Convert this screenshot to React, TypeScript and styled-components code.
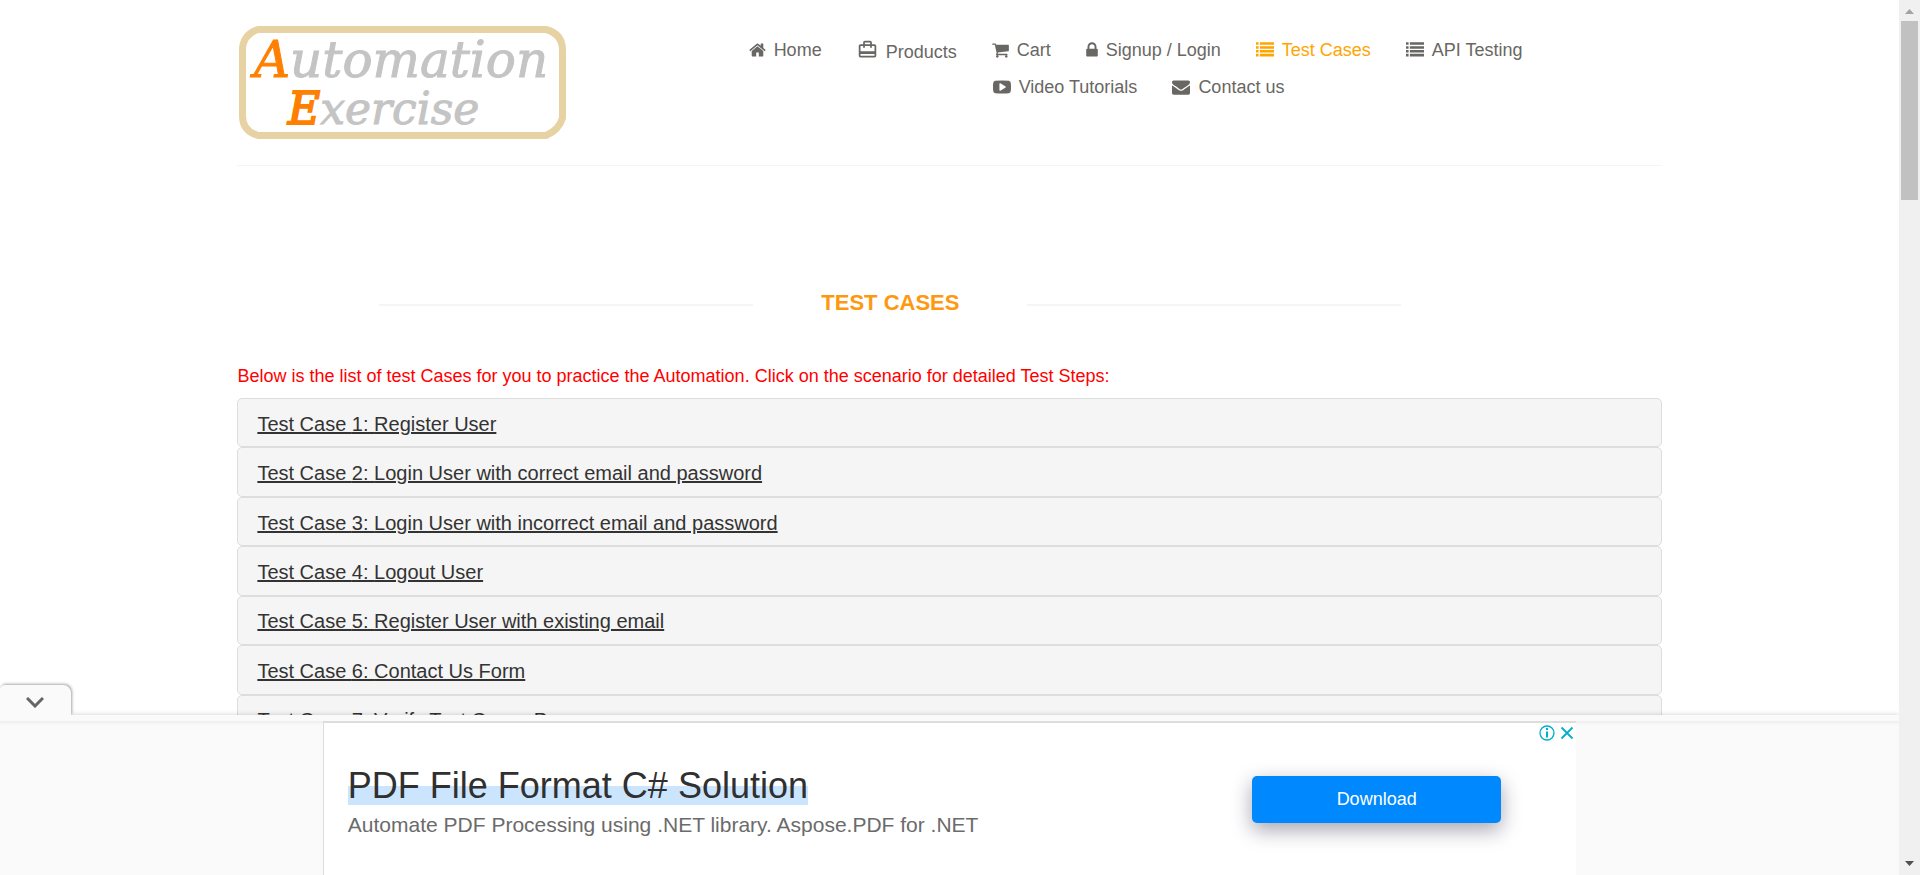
import React from "react";
import styled, { createGlobalStyle } from "styled-components";
import { MdCardTravel } from "react-icons/md";

const GlobalStyle = createGlobalStyle`
  *, *::before, *::after { box-sizing: border-box; }
  body {
    margin: 0;
    background: #fff;
    font-family: "Liberation Sans", Arial, Helvetica, sans-serif;
    overflow: hidden;
  }
  h2, h4, p, ul { margin: 0; padding: 0; font-weight: 400; }
  ul { list-style: none; }
  svg { display: block; flex: none; }
`;

const Shell = styled.div`
  display: flex;
  height: 100vh;
`;

const Page = styled.div`
  flex: 1;
  min-width: 0;
  overflow: hidden;
  display: flex;
  flex-direction: column;
`;

const Scroll = styled.div`
  flex: 1;
  min-height: 0;
  overflow: hidden;
`;

const Container = styled.div`
  width: 75%;
  min-width: 1200px;
  margin: 0 auto;
`;

const Header = styled.header`
  display: flex;
  justify-content: space-between;
  align-items: flex-start;
  padding: 26px 0 26px 2px;
  border-bottom: 1px solid #f5f5f5;
`;

const Nav = styled.nav`
  width: 913px;
  padding-top: 12px;
`;

const NavRow = styled.ul<{ $indent?: boolean }>`
  display: flex;
  align-items: flex-start;
  gap: 35px;
  height: 37px;
  padding-left: ${(p) => (p.$indent ? 244 : 0)}px;
`;

const NavLink = styled.a<{ $active?: boolean; $low?: boolean }>`
  display: flex;
  align-items: center;
  gap: 8px;
  color: ${(p) => (p.$active ? "orange" : "#696763")};
  font-size: 18px;
  line-height: ${(p) => (p.$low ? 28 : 24)}px;
  text-decoration: none;
  white-space: nowrap;

  svg {
    margin-bottom: ${(p) => (p.$low ? 6 : 0)}px;
  }
`;

const TitleBar = styled.div`
  display: flex;
  justify-content: center;
  align-items: center;
  width: 1306px;
  margin-top: 123px;
`;

const Rule = styled.span`
  width: 374px;
  height: 2px;
  margin-top: 4px;
  background: #f5f5f5;
`;

const Title = styled.h2`
  width: 274px;
  text-align: center;
  color: #fe980f;
  font-size: 22px;
  font-weight: 700;
  line-height: 28px;
`;

const Intro = styled.p`
  margin-top: 47px;
  color: red;
  font-size: 18px;
  line-height: 24px;
`;

const CaseList = styled.ul`
  display: grid;
  grid-auto-rows: 1fr;
  min-height: 346px;
  margin-top: 10px;
`;

const CaseItem = styled.li`
  display: flex;
  align-items: center;
  padding: 2px 19px 0;
  border: 1px solid #ddd;
  border-radius: 5px;
  background: #f5f5f5;
`;

const CaseLink = styled.a`
  color: #333;
  font-size: 20px;
  line-height: 24px;
  text-decoration: underline;
`;

const AdDock = styled.section`
  position: relative;
  border-top: 6px solid #fafafa;
  background: #fafafa;
  box-shadow: 0 0 5px rgba(0, 0, 0, 0.2);
`;

const CollapseTab = styled.button`
  position: absolute;
  left: 0;
  bottom: 100%;
  display: flex;
  align-items: center;
  justify-content: center;
  width: 71px;
  height: 30px;
  margin-bottom: 6px;
  padding: 4px 1px 0 0;
  border: 0;
  border-radius: 5px 8px 0 0;
  background: #fafafa;
  box-shadow: 1px -1px 3px rgba(0, 0, 0, 0.35);
  clip-path: inset(-6px -6px 0 0);
`;

const AdFrame = styled.div`
  background: linear-gradient(#eee, #fafafa) top / 100% 4px no-repeat;
`;

const AdCard = styled.div`
  position: relative;
  display: flex;
  justify-content: space-between;
  align-items: flex-start;
  width: 66%;
  min-width: 1100px;
  height: 154px;
  margin: 0 auto;
  padding: 45px 75px 0 26px;
  border-top: 2px solid #ddd;
  border-left: 1px solid #ddd;
  background: #fff;
`;

const AdCopy = styled.div`
  margin-left: -2px;
`;

const AdHeading = styled.a`
  display: inline-block;
  height: 37px;
  color: #303030;
  background: linear-gradient(#cce5ff, #cce5ff) left bottom / 100% 19px no-repeat;
  font-size: 36px;
  line-height: 36px;
  text-decoration: none;
`;

const AdText = styled.p`
  margin-top: 7px;
  color: #6b6b6b;
  font-size: 21px;
  line-height: 26px;
`;

const Download = styled.button`
  width: 249px;
  height: 47px;
  margin-top: 8px;
  border: 0;
  border-radius: 5px;
  background: #08f;
  box-shadow: 0 7px 20px rgba(30, 30, 60, 0.4);
  color: #fff;
  font-family: inherit;
  font-size: 18px;
`;

const AdControls = styled.div`
  position: absolute;
  top: 2px;
  right: 2px;
  display: flex;
  gap: 5px;
`;

const AdControl = styled.button`
  padding: 0;
  border: 0;
  background: none;
`;

const Bar = styled.div`
  display: flex;
  flex-direction: column;
  align-items: center;
  width: 21px;
  padding: 9px 0;
  background: #f0f0f0;
`;

const Thumb = styled.div`
  width: 17px;
  height: 179px;
  margin: 7px 0 auto;
  background: #c1c1c1;
`;

const square = (x: number, w: number) => [128, 512, 896, 1280].map((y) => `M${x} ${y}h${w}v256h-${w}z`).join("");

const icons = {
  home: {
    x: 64, w: 1664, size: 17,
    d: "M1472 992v480q0 26-19 45t-45 19h-384v-384h-256v384h-384q-26 0-45-19t-19-45v-480q0-1 .5-3t.5-3l575-474 575 474q1 2 1 6zm223-69l-62 74q-8 9-21 11h-3q-13 0-21-7l-692-577-692 577q-12 8-24 7-13-2-21-11l-62-74q-8-10-7-23.5t11-21.5l719-599q32-26 76-26t76 26l244 204v-195q0-14 9-23t23-9h192q14 0 23 9t9 23v408l219 182q10 8 11 21.5t-7 23.5z",
  },
  cart: {
    x: 64, w: 1664, size: 17,
    d: "M704 1536q0 52-38 90t-90 38-90-38-38-90 38-90 90-38 90 38 38 90zm896 0q0 52-38 90t-90 38-90-38-38-90 38-90 90-38 90 38 38 90zm128-1088v512q0 24-16.5 42.5t-40.5 21.5l-1044 122q13 60 13 70 0 16-24 64h920q26 0 45 19t19 45-19 45-45 19h-1024q-26 0-45-19t-19-45q0-11 8-31.5t16-36 21.5-40 15.5-29.5l-177-823h-204q-26 0-45-19t-19-45 19-45 45-19h256q16 0 28.5 6.5t19.5 15.5 13 24.5 8 26 5.5 29.5 4.5 26h1201q26 0 45 19t19 45z",
  },
  lock: {
    x: 320, w: 1152, size: 12,
    d: "M640 768h512v-192q0-106-75-181t-181-75-181 75-75 181v192zm832 96v576q0 40-28 68t-68 28h-960q-40 0-68-28t-28-68v-576q0-40 28-68t68-28h32v-192q0-184 132-316t316-132 316 132 132 316v192h32q40 0 68 28t28 68z",
  },
  list: { x: 0, w: 1792, size: 18, d: square(0, 256) + square(384, 1408) },
  video: {
    x: 0, w: 1792, size: 18,
    d: "M1280 896q0-37-30-54l-512-320q-31-20-65-2-33 18-33 56v640q0 38 33 56 16 8 31 8 20 0 34-10l512-320q30-17 30-54zm512 0q0 96-1 150t-8.5 136.5-22.5 147.5q-16 73-69 123t-124 58q-222 25-671 25t-671-25q-71-8-124.5-58t-69.5-123q-14-65-21.5-147.5t-8.5-136.5-1-150 1-150 8.5-136.5 22.5-147.5q16-73 69-123t124-58q222-25 671-25t671 25q71 8 124.5 58t69.5 123q14 65 21.5 147.5t8.5 136.5 1 150z",
  },
  mail: {
    x: 0, w: 1792, size: 18,
    d: "M1792 710v794q0 66-47 113t-113 47h-1472q-66 0-113-47t-47-113v-794q44 49 101 87 362 246 497 345 57 42 92.5 65.5t94.5 48 110 24.5h2q51 0 110-24.5t94.5-48 92.5-65.5q170-123 498-345 57-39 100-87zm0-294q0 79-49 151t-122 123q-376 261-468 325-10 7-42.5 31t-54 38.5-52 32.5-57.5 27-50 9h-2q-23 0-50-9t-57.5-27-52-32.5-54-38.5-42.5-31q-91-64-262-182.5t-205-142.5q-62-42-117-115.5t-55-136.5q0-78 41.5-130t118.5-52h1472q65 0 112.5 47t47.5 113z",
  },
};

function Icon({ name }: { name: keyof typeof icons }) {
  const { x, w, size, d } = icons[name];
  return (
    <svg width={size} height={18} viewBox={`${x} 0 ${w} 1792`} fill="currentColor" aria-hidden="true">
      <path d={d} />
    </svg>
  );
}

function Logo() {
  return (
    <svg width="327" height="113" viewBox="0 0 327 113" role="img" aria-label="Automation Exercise">
      <path
        d="M19 3.500H307Q323.500 8 323.500 24V92Q320 104 307 109.500H19Q3.500 105 3.500 90V22Q5 8 19 3.500Z"
        fill="#fff"
        stroke="#e6d2a2"
        strokeWidth="7"
      />
      <g fontFamily="'DejaVu Serif', 'Liberation Serif', serif" fontStyle="italic" fill="#c4c4c4" stroke="#c4c4c4">
        <text x="15" y="51" fontSize="50">
          <tspan fill="#ff8000" stroke="#ff8000">A</tspan>
          <tspan>utomation</tspan>
        </text>
        <text x="49" y="98" fontSize="44">
          <tspan fill="#ff8000" stroke="#ff8000" strokeWidth="2">E</tspan>
          <tspan>xercise</tspan>
        </text>
      </g>
    </svg>
  );
}

const cases = [
  "Register User",
  "Login User with correct email and password",
  "Login User with incorrect email and password",
  "Logout User",
  "Register User with existing email",
  "Contact Us Form",
  "Verify Test Cases Page",
];

export default function App() {
  return (
    <Shell>
      <GlobalStyle />
      <Page>
        <Scroll>
          <Container>
            <Header>
              <a href="#home"><Logo /></a>
              <Nav>
                <NavRow>
                  <li><NavLink href="#home"><Icon name="home" />Home</NavLink></li>
                  <li><NavLink href="#products" $low><MdCardTravel size={21} />Products</NavLink></li>
                  <li><NavLink href="#cart"><Icon name="cart" />Cart</NavLink></li>
                  <li><NavLink href="#login"><Icon name="lock" />Signup / Login</NavLink></li>
                  <li><NavLink href="#cases" $active><Icon name="list" />Test Cases</NavLink></li>
                  <li><NavLink href="#api"><Icon name="list" />API Testing</NavLink></li>
                </NavRow>
                <NavRow $indent>
                  <li><NavLink href="#videos"><Icon name="video" />Video Tutorials</NavLink></li>
                  <li><NavLink href="#contact"><Icon name="mail" />Contact us</NavLink></li>
                </NavRow>
              </Nav>
            </Header>
            <main>
              <TitleBar>
                <Rule />
                <Title>TEST CASES</Title>
                <Rule />
              </TitleBar>
              <Intro>
                Below is the list of test Cases for you to practice the Automation. Click on the scenario for detailed Test Steps:
              </Intro>
              <CaseList>
                {cases.map((name, i) => (
                  <CaseItem key={name}>
                    <CaseLink href={`#case${i + 1}`}>Test Case {i + 1}: {name}</CaseLink>
                  </CaseItem>
                ))}
              </CaseList>
            </main>
          </Container>
        </Scroll>
        <AdDock>
          <CollapseTab aria-label="Collapse advertisement">
            <svg width="18" height="11" viewBox="0 0 18 11" fill="none" stroke="#666" strokeWidth="3">
              <path d="M1 1l8 8 8-8" />
            </svg>
          </CollapseTab>
          <AdFrame>
            <AdCard>
              <AdCopy>
                <AdHeading href="#ad">PDF File Format C# Solution</AdHeading>
                <AdText>Automate PDF Processing using .NET library. Aspose.PDF for .NET</AdText>
              </AdCopy>
              <Download>Download</Download>
              <AdControls>
                <AdControl aria-label="About this ad">
                  <svg width="16" height="16" viewBox="0 0 16 16" fill="none" stroke="#00aecd">
                    <circle cx="8" cy="8" r="7" strokeWidth="1.300" />
                    <path d="M8 3v2M8 6.500v6" strokeWidth="2" />
                  </svg>
                </AdControl>
                <AdControl aria-label="Close ad">
                  <svg width="14" height="16" viewBox="0 0 14 16" fill="none" stroke="#00aecd" strokeWidth="1.800">
                    <path d="M1.500 2.500l11 11M12.500 2.500l-11 11" />
                  </svg>
                </AdControl>
              </AdControls>
            </AdCard>
          </AdFrame>
        </AdDock>
      </Page>
      <Bar>
        <svg width="9" height="5" viewBox="0 0 9 5"><path d="M0 5L4.500 0L9 5z" fill="#a3a3a3" /></svg>
        <Thumb />
        <svg width="9" height="5" viewBox="0 0 9 5"><path d="M0 0L4.500 5L9 0z" fill="#505050" /></svg>
      </Bar>
    </Shell>
  );
}
